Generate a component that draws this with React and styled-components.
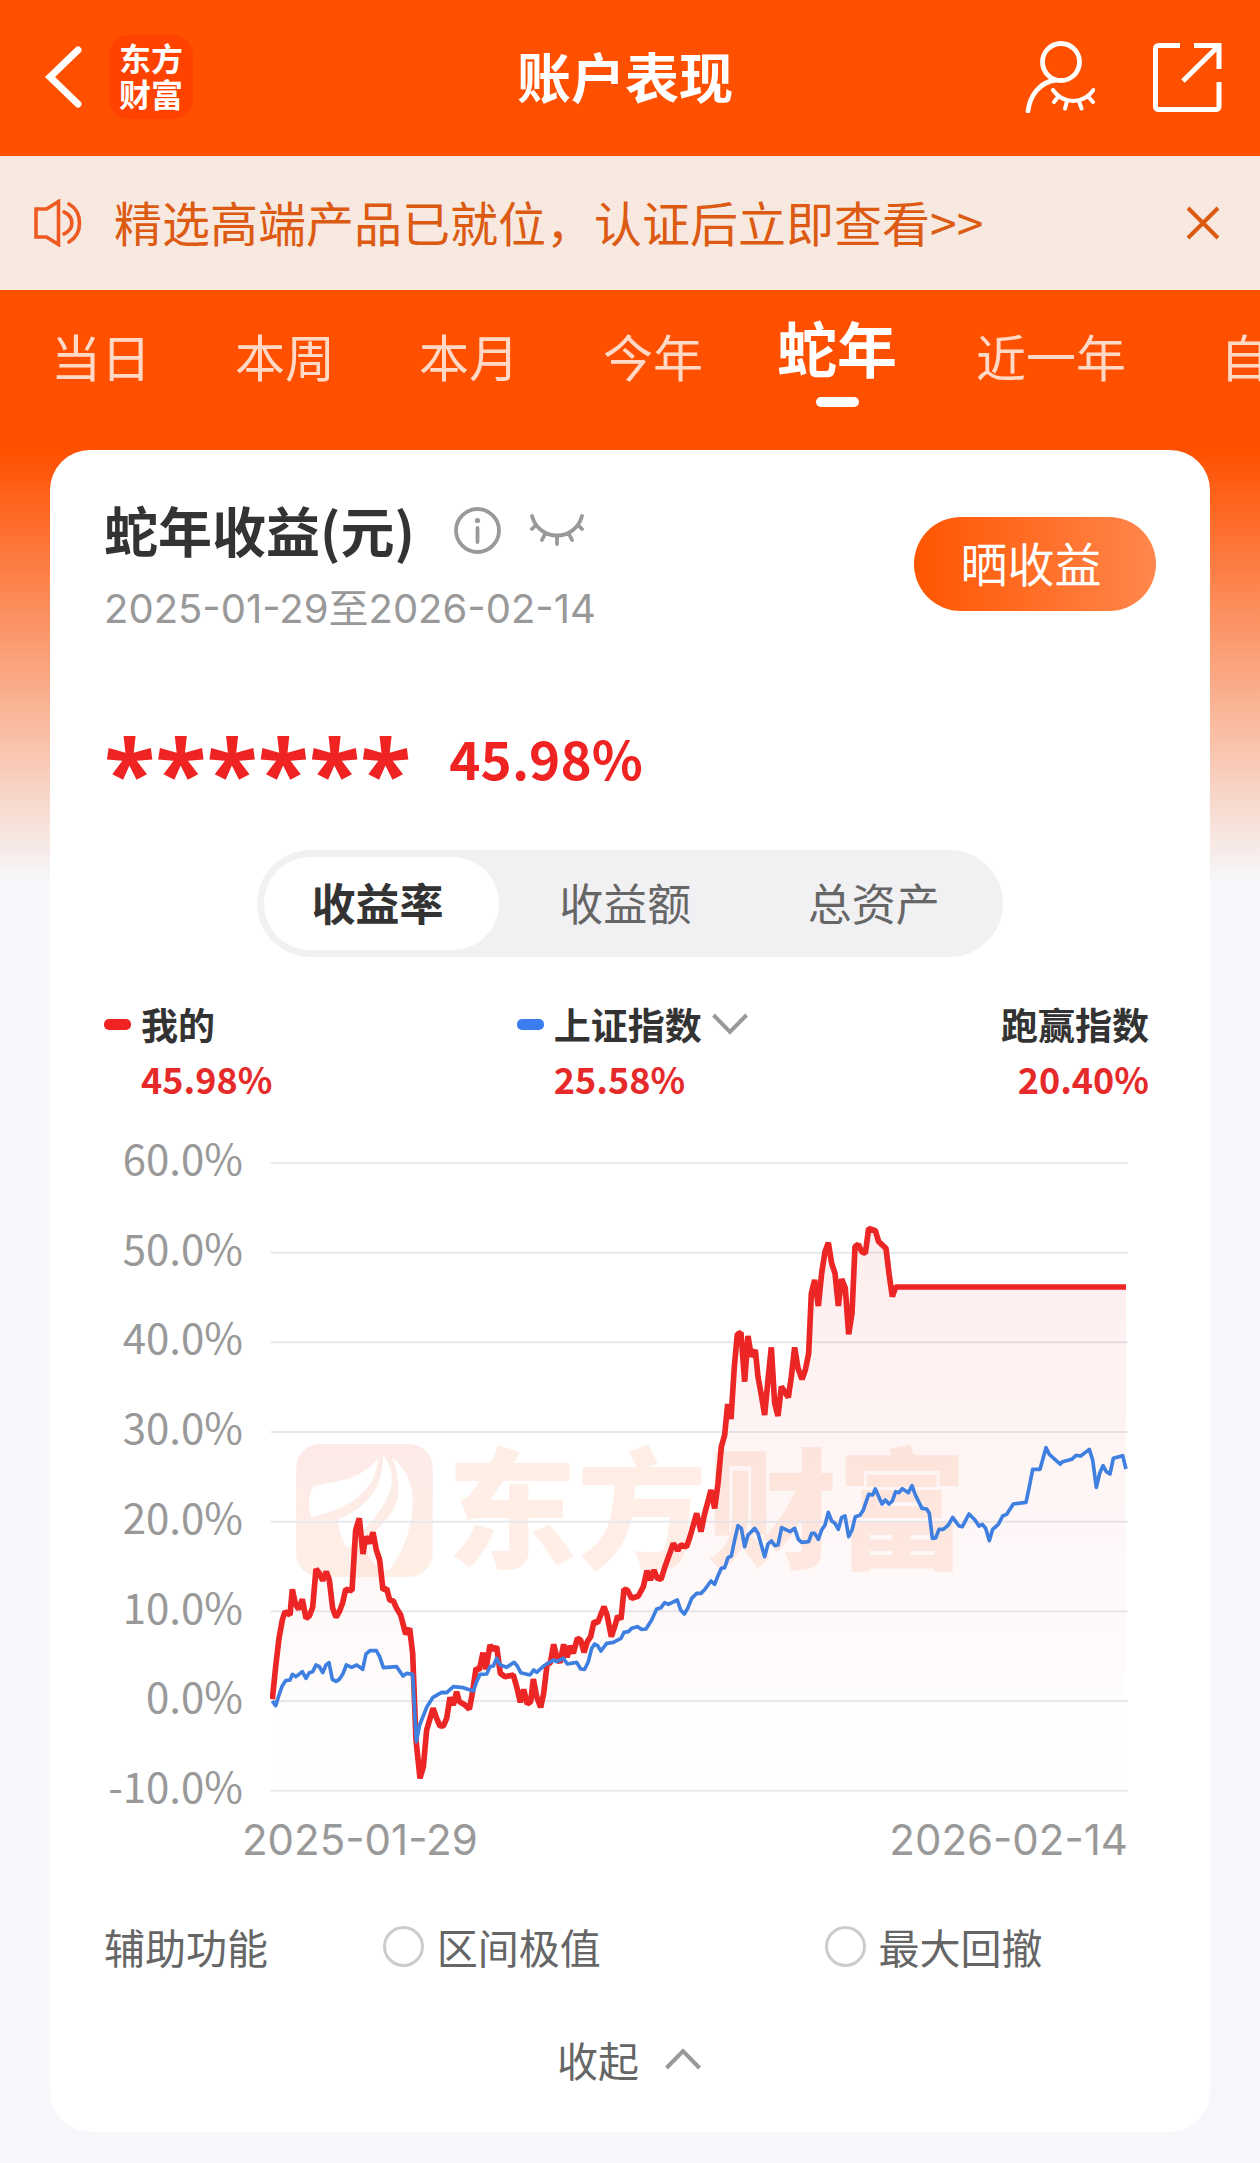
import React, { useState } from "react";
import styled, { createGlobalStyle, css } from "styled-components";

const GlobalStyle = createGlobalStyle`
  *, *::before, *::after { box-sizing: border-box; }
  body {
    margin: 0;
    background: #f6f7fa;
    font-family: "Noto Sans CJK SC", "Liberation Sans", sans-serif;
  }
  h1, h2, p { margin: 0; }
  button, select, input { font: inherit; color: inherit; }
`;

const colors = {
  brand: "#ff5000",
  notice: "#dc5a12",
  ink: "#333333",
  body: "#666666",
  muted: "#999999",
  rise: "#f02323",
  index: "#3f7fe0",
};

const plainButton = css`
  border: 0;
  padding: 0;
  background: none;
  cursor: pointer;
`;

const Page = styled.div`
  padding-bottom: 31px;
  background: linear-gradient(${colors.brand} 450px, #f6f7fa 880px);
  overflow: hidden;
`;

const Header = styled.header`
  display: grid;
  grid-template-columns: 1fr auto 1fr;
  align-items: center;
  height: 156px;
  padding: 0 38px 2px 44px;
  color: #fff;
`;

const HeaderSide = styled.div`
  display: flex;
  align-items: center;
  justify-content: ${(p) => (p.$end ? "flex-end" : "flex-start")};
  gap: ${(p) => (p.$end ? 58 : 26)}px;
`;

const IconButton = styled.button`
  ${plainButton}
  display: flex;
  flex: none;
`;

const Title = styled.h1`
  font-size: 54px;
  line-height: 72px;
  font-weight: 700;
  padding: 0 16px 2px 0;
`;

const LogoTile = styled.a`
  width: 84px;
  height: 84px;
  padding: 4px 10px;
  border-radius: 20px;
  background: #ff4200;
  color: #fff;
  text-align: center;
  text-decoration: none;
  font-size: 32px;
  line-height: 36px;
  font-weight: 700;
`;

const Notice = styled.div`
  display: flex;
  align-items: center;
  height: 134px;
  padding: 0 40px 0 34px;
  background: #f7e8e0;
  color: ${colors.notice};
`;

const NoticeLink = styled.a`
  flex: 1;
  margin-left: 32px;
  padding-bottom: 4px;
  color: inherit;
  text-decoration: none;
  font-size: 48px;
  line-height: 64px;
  white-space: nowrap;
`;

const Tabs = styled.nav`
  display: flex;
  height: 160px;
  padding-left: 9px;
`;

const Tab = styled.button`
  ${plainButton}
  flex: none;
  display: flex;
  flex-direction: column;
  align-items: center;
  width: ${(p) => (p.$wide ? 244 : 184)}px;
  padding-top: ${(p) => (p.$active ? 17 : 25)}px;
  color: ${(p) => (p.$active ? "#fff" : "#ffd9c6")};
  font-size: ${(p) => (p.$active ? 60 : 50)}px;
  font-weight: ${(p) => (p.$active ? 700 : 400)};
  line-height: 80px;

  &::after {
    content: "";
    width: 43px;
    height: 10px;
    margin-top: 10px;
    border-radius: 5px;
    background: ${(p) => (p.$active ? "#fff" : "transparent")};
  }
`;

const Card = styled.main`
  margin: 0 50px;
  padding: 50px 54px 43px;
  border-radius: 40px;
  background: #fff;
`;

const CardHead = styled.div`
  display: flex;
  justify-content: space-between;
  align-items: flex-start;
`;

const TitleRow = styled.div`
  display: flex;
  align-items: center;
`;

const CardTitle = styled.h2`
  margin-right: 39px;
  font-size: 54px;
  line-height: 60px;
  font-weight: 700;
  color: ${colors.ink};
`;

const EyeButton = styled(IconButton)`
  margin-left: 29px;
`;

const Period = styled.p`
  margin-top: 24px;
  font-family: Inter, "Noto Sans CJK SC", sans-serif;
  font-size: 40px;
  line-height: 50px;
  color: ${colors.muted};
`;

const ShareButton = styled.button`
  ${plainButton}
  width: 242px;
  height: 94px;
  margin-top: 17px;
  padding: 0 8px 4px 0;
  border-radius: 47px;
  background: linear-gradient(90deg, #ff5500, #ff874d);
  color: #fff;
  font-size: 47px;
  line-height: 64px;
`;

const Amount = styled.div`
  display: flex;
  align-items: center;
  height: 100px;
  margin-top: 73px;
  color: ${colors.rise};
  font-weight: 700;
`;

const Masked = styled.span`
  height: 72px;
  font-family: "Open Sans", sans-serif;
  font-size: 94px;
  line-height: 100px;
`;

const Rate = styled.span`
  margin-left: 38px;
  font-size: 53px;
  line-height: 72px;
`;

const Segments = styled.div`
  display: flex;
  width: 746px;
  max-width: 100%;
  height: 107px;
  margin: 43px auto 0;
  padding: 7px;
  border-radius: 54px;
  background: #f1f1f4;
`;

const Segment = styled.button`
  ${plainButton}
  flex: ${(p) => (p.$active ? "0 0 235px" : "1")};
  padding: ${(p) => (p.$active ? "0 8px 4px 0" : "0 0 4px 4px")};
  border-radius: 47px;
  background: ${(p) => (p.$active ? "#fff" : "transparent")};
  color: ${(p) => (p.$active ? colors.ink : colors.body)};
  font-size: 44px;
  font-weight: ${(p) => (p.$active ? 700 : 400)};
`;

const Legend = styled.div`
  display: grid;
  grid-template-columns: 39.5% 1fr auto;
  margin-top: 44px;
  padding-right: 7px;
`;

const LegendItem = styled.div`
  display: grid;
  grid-template-columns: ${(p) => (p.$marker ? "27px auto" : "auto")};
  column-gap: 10px;
  row-gap: 8px;
  align-items: center;
  justify-content: start;
  justify-items: ${(p) => (p.$marker ? "start" : "end")};
`;

const Marker = styled.span`
  width: 27px;
  height: 11px;
  border-radius: 5px;
  background: ${(p) => p.$color};
`;

const LegendName = styled.span`
  font-size: 37px;
  line-height: 46px;
  font-weight: 700;
  color: ${colors.ink};
`;

const LegendValue = styled.span`
  grid-column: ${(p) => (p.$indent ? 2 : 1)};
  font-size: 36px;
  line-height: 46px;
  font-weight: 700;
  color: #e62a2a;
`;

const SelectWrap = styled.div`
  display: flex;
  align-items: center;

  svg { margin-left: -36px; pointer-events: none; }
`;

const IndexSelect = styled.select`
  appearance: none;
  border: 0;
  margin: 0;
  padding: 0 46px 0 0;
  background: none;
  color: ${colors.ink};
  font-size: 37px;
  line-height: 46px;
  height: 46px;
  font-weight: 700;
`;

const Chart = styled.div`
  display: flex;
  margin-top: 36px;
  padding-right: 28px;
`;

const YAxis = styled.div`
  display: flex;
  flex-direction: column;
  justify-content: space-between;
  align-items: flex-end;
  flex: none;
  width: 139px;
  height: 668px;
  color: ${colors.muted};
  font-size: 42px;
  line-height: 40px;
`;

const Plot = styled.div`
  position: relative;
  flex: 1;
  margin: 23px 0 0 27px;
`;

const PlotSvg = styled.svg`
  position: relative;
  display: block;
  width: 100%;
  height: 640px;
`;

const Watermark = styled.div`
  position: absolute;
  top: 284px;
  left: 26px;
  display: flex;
  align-items: center;
  gap: 14px;
  height: 133px;
  color: #feeee5;
  font-size: 130px;
  line-height: 133px;
  font-weight: 900;
  white-space: nowrap;

  span { padding-bottom: 18px; }
`;

const XAxis = styled.div`
  display: flex;
  justify-content: space-between;
  margin: 10px 28px 0 138px;
  color: ${colors.muted};
  font-family: Inter, sans-serif;
  font-size: 42px;
  line-height: 50px;
`;

const Helpers = styled.fieldset`
  display: flex;
  align-items: center;
  margin: 56px 0 0;
  padding: 0;
  border: 0;
  min-width: 0;
  font-size: 41px;
  line-height: 50px;
  color: ${colors.body};
`;

const HelperTitle = styled.span`
  width: 26.5%;
`;

const Option = styled.label`
  display: flex;
  align-items: center;
  gap: 13px;
  width: ${(p) => p.$width};
`;

const Radio = styled.input`
  appearance: none;
  flex: none;
  width: 41px;
  height: 41px;
  margin: 0;
  border: 3px solid #cccccc;
  border-radius: 50%;
  background: #fff;

  &:checked { border: 12px solid ${colors.brand}; }
`;

const Collapse = styled.button`
  ${plainButton}
  display: flex;
  align-items: center;
  gap: 24px;
  margin: 58px auto 0;
  color: ${colors.body};
  font-size: 41px;
  line-height: 60px;
`;

const BackIcon = () => (
  <svg width="39" height="62" viewBox="0 0 39 62" fill="none" stroke="#fff" strokeWidth="7" strokeLinecap="round">
    <path d="M34 4 6 31l28 27" />
  </svg>
);

const HiddenUserIcon = () => (
  <svg width="70" height="72" viewBox="0 0 70 72" fill="none" stroke="#fff" strokeLinecap="round">
    <g strokeWidth="4.8">
      <circle cx="36" cy="21" r="18.5" />
      <path d="M3 70C5 54 15 41 31 39" />
    </g>
    <path strokeWidth="4" d="M28 49c10 14.500 30.500 14.500 40.500 0M33 56l-4 5M42 60l-2 7.500M54 60l2.500 7.500M63.500 56l4.500 5" />
  </svg>
);

const ShareIcon = () => (
  <svg width="69" height="69" viewBox="0 0 69 69" fill="none" stroke="#fff" strokeWidth="5">
    <path d="M27 2.500H5.500a3 3 0 0 0-3 3v58a3 3 0 0 0 3 3h57.500a3 3 0 0 0 3-3V39M41 2.500h25V26M66 2.500 30 38" />
  </svg>
);

const SpeakerIcon = () => (
  <svg width="48" height="48" viewBox="0 0 48 48" fill="none" stroke="#ee5a20" strokeWidth="3.600" strokeLinecap="round">
    <path d="M2 10h10.500L24.500 2.500v43L12.500 38H2zM30 13c10.500 5 10.500 17 0 22M35 5c14 8 14 30 0 38" />
  </svg>
);

const CloseIcon = () => (
  <svg width="34" height="34" viewBox="0 0 34 34" fill="none" stroke={colors.notice} strokeWidth="4">
    <path d="m2 2 30 30M32 2 2 32" />
  </svg>
);

const InfoIcon = () => (
  <svg width="47" height="47" viewBox="0 0 47 47" fill="none" stroke={colors.muted} strokeWidth="3.800" strokeLinecap="round">
    <circle cx="23.500" cy="23.500" r="21.500" />
    <path d="M23.500 21v14" />
    <circle cx="23.500" cy="13.500" r="2.600" fill={colors.muted} stroke="none" />
  </svg>
);

const ClosedEyeIcon = () => (
  <svg width="54" height="32" viewBox="0 0 54 32" fill="none" stroke={colors.muted} strokeWidth="3.800" strokeLinecap="round">
    <path d="M2 2c7 26 43 26 50 0M6 11l-4 4M48 11l4 4M15.500 19 12 26M38.500 19l3.500 7M27 22v8" />
  </svg>
);

const Chevron = ({ up, width }) => (
  <svg width={width} height="22" viewBox="0 0 36 22" fill="none" stroke={colors.muted} strokeWidth="4">
    <path d={up ? "M1.500 20 18 3l16.500 17" : "M1.500 2 18 19 34.500 2"} />
  </svg>
);

const WatermarkLogo = () => (
  <svg width="137" height="133" viewBox="0 0 411 400">
    <defs>
      <linearGradient id="leaf" x1="0" y1="0" x2="0" y2="1">
        <stop offset="0" stopColor="#fdeae8" />
        <stop offset="1" stopColor="#feefe5" />
      </linearGradient>
    </defs>
    <rect width="411" height="400" rx="72" fill="url(#leaf)" />
    <g fill="#fff">
      <path d="M246 42C190 115 110 112 55 126C35 145 35 190 45 220C150 195 240 150 246 42Z" />
      <path d="M262 32C295 80 295 120 270 170C240 230 185 270 155 314C140 290 125 260 125 228C205 190 258 150 262 32Z" />
      <path d="M288 40C340 80 355 140 350 190C345 270 310 340 282 378C250 385 215 350 212 310C225 260 300 220 307 150C309 110 300 70 288 40Z" />
    </g>
  </svg>
);

/* Plot units are a third of a pixel; the 20% line lies at 305 and each 10% takes 269. */
const GRID = [-771, -502, -233, 36, 305, 574, 843, 1112];

const MINE =
  "97,838 107,740 117,655 127,600 135,575 150,585 157,508 166,550 176,568 187,538 198,595 208,588 218,562 228,447 238,460 248,482 259,455 268,480 278,565 288,592 298,575 308,548 317,508 336,512 347,330 358,295 369,402 377,350 388,370 399,337 409,390 419,420 429,510 440,505 449,540 460,543 470,565 482,585 497,642 509,625 518,700 528,960 540,1075 550,1040 560,930 579,865 590,895 600,918 610,918 620,895 630,832 640,855 650,815 658,845 675,855 688,868 697,820 708,745 718,750 729,698 738,748 750,675 760,690 770,680 781,760 795,770 820,765 830,800 841,847 851,808 862,852 872,845 880,777 890,830 902,862 911,820 921,735 931,728 941,673 950,710 960,728 971,673 981,712 990,678 1000,700 1012,655 1022,660 1032,697 1042,665 1052,650 1062,605 1073,608 1092,560 1101,585 1114,650 1124,620 1133,588 1143,598 1152,508 1162,510 1175,535 1195,528 1210,500 1221,452 1231,480 1242,450 1252,475 1263,478 1275,440 1300,370 1313,392 1322,375 1340,380 1350,350 1370,280 1383,335 1393,285 1413,210 1424,265 1434,190 1444,80 1454,45 1463,-48 1473,-3 1483,-160 1492,-257 1503,-262 1514,-115 1524,-252 1534,-190 1546,-210 1554,-130 1564,-75 1574,-15 1584,-120 1594,-218 1604,-50 1614,-12 1624,-100 1645,-68 1654,-130 1664,-218 1674,-155 1686,-122 1696,-150 1706,-200 1714,-380 1724,-420 1735,-342 1745,-440 1755,-505 1765,-532 1775,-470 1785,-440 1795,-342 1805,-423 1816,-395 1826,-257 1836,-320 1845,-520 1855,-527 1865,-505 1876,-500 1886,-575 1906,-568 1916,-535 1938,-515 1947,-440 1957,-370 1967,-399 2658,-399";

const INDEX =
  "97,843 107,857 117,825 127,797 137,782 150,780 157,763 168,770 187,755 198,775 208,758 218,755 228,735 238,740 248,758 258,735 267,728 277,778 288,784 298,778 308,763 319,735 335,742 350,735 368,748 378,702 390,692 409,692 419,710 430,743 470,740 489,768 500,760 518,763 529,965 539,915 560,862 579,832 605,817 620,818 640,800 670,803 700,813 710,785 720,763 740,762 750,740 760,738 770,715 781,735 800,742 822,727 832,738 842,758 870,765 881,750 890,757 911,738 940,720 950,725 970,715 982,732 1010,727 1022,747 1034,748 1045,725 1055,685 1064,672 1073,677 1083,693 1100,670 1120,667 1143,655 1152,637 1165,635 1175,625 1192,620 1205,628 1218,627 1235,600 1250,567 1263,563 1274,548 1285,553 1312,540 1322,570 1333,582 1343,565 1355,535 1370,520 1383,520 1393,510 1413,483 1424,493 1434,467 1444,445 1454,443 1464,413 1474,408 1484,360 1494,317 1504,325 1514,380 1524,345 1544,325 1554,340 1564,375 1574,410 1584,372 1594,363 1605,377 1614,375 1625,323 1650,335 1664,325 1675,358 1685,367 1706,365 1715,340 1724,340 1735,358 1745,330 1755,315 1765,277 1775,303 1785,310 1795,328 1805,292 1815,288 1826,350 1836,330 1846,290 1860,286 1870,270 1886,223 1898,225 1906,207 1926,252 1936,240 1947,252 1957,243 1967,215 1977,218 1987,206 2005,218 2016,197 2026,225 2046,265 2060,267 2068,280 2077,355 2087,354 2097,328 2110,328 2125,315 2138,292 2157,318 2167,320 2187,282 2205,300 2217,318 2227,313 2237,325 2248,362 2258,328 2275,313 2288,288 2300,283 2320,252 2358,247 2368,200 2378,148 2400,148 2418,83 2428,103 2460,132 2468,125 2495,118 2508,106 2522,108 2548,88 2558,120 2569,202 2579,160 2589,137 2599,155 2610,162 2620,115 2648,107 2658,147";

const TrendPlot = () => (
  <PlotSvg viewBox="90 -780 2574 1920" preserveAspectRatio="none" role="img" aria-label="收益率">
    <defs>
      <linearGradient id="fade" gradientUnits="userSpaceOnUse" x1="0" y1="-580" x2="0" y2="1112">
        <stop offset="0" stopColor="#f02323" stopOpacity="0.08" />
        <stop offset="1" stopColor="#f02323" stopOpacity="0" />
      </linearGradient>
    </defs>
    {GRID.map((y) => (
      <path key={y} d={`M92 ${y}H2664`} stroke="#e8e9ee" strokeWidth="6" />
    ))}
    <polygon points={`97,1112 ${MINE} 2658,1112`} fill="url(#fade)" />
    <g fill="none">
      <polyline points={MINE} stroke="#ec2525" strokeWidth="17" strokeLinejoin="bevel" />
      <polyline points={INDEX} stroke={colors.index} strokeWidth="11" strokeLinejoin="round" />
    </g>
  </PlotSvg>
);

const TABS = ["当日", "本周", "本月", "今年", "蛇年", "近一年", "自定义"];
const SEGMENTS = ["收益率", "收益额", "总资产"];
const LEVELS = ["60.0%", "50.0%", "40.0%", "30.0%", "20.0%", "10.0%", "0.0%", "-10.0%"];

export default function App() {
  const [tab, setTab] = useState("蛇年");
  const [segment, setSegment] = useState("收益率");

  return (
    <>
      <GlobalStyle />
      <Page>
        <Header>
          <HeaderSide>
            <IconButton aria-label="返回"><BackIcon /></IconButton>
            <LogoTile href="#home">东方财富</LogoTile>
          </HeaderSide>
          <Title>账户表现</Title>
          <HeaderSide $end>
            <IconButton aria-label="隐藏账户"><HiddenUserIcon /></IconButton>
            <IconButton aria-label="分享"><ShareIcon /></IconButton>
          </HeaderSide>
        </Header>

        <Notice>
          <SpeakerIcon />
          <NoticeLink href="#verify">精选高端产品已就位，认证后立即查看&gt;&gt;</NoticeLink>
          <IconButton aria-label="关闭"><CloseIcon /></IconButton>
        </Notice>

        <Tabs>
          {TABS.map((name) => (
            <Tab key={name} $active={name === tab} $wide={name.length > 2} onClick={() => setTab(name)}>
              {name}
            </Tab>
          ))}
        </Tabs>

        <Card>
          <CardHead>
            <div>
              <TitleRow>
                <CardTitle>蛇年收益(元)</CardTitle>
                <IconButton aria-label="说明"><InfoIcon /></IconButton>
                <EyeButton aria-label="显示金额"><ClosedEyeIcon /></EyeButton>
              </TitleRow>
              <Period>2025-01-29至2026-02-14</Period>
            </div>
            <ShareButton>晒收益</ShareButton>
          </CardHead>

          <Amount>
            <Masked>******</Masked>
            <Rate>45.98%</Rate>
          </Amount>

          <Segments>
            {SEGMENTS.map((name) => (
              <Segment key={name} $active={name === segment} onClick={() => setSegment(name)}>
                {name}
              </Segment>
            ))}
          </Segments>

          <Legend>
            <LegendItem $marker>
              <Marker $color={colors.rise} />
              <LegendName>我的</LegendName>
              <LegendValue $indent>45.98%</LegendValue>
            </LegendItem>
            <LegendItem $marker>
              <Marker $color="#3b7df0" />
              <SelectWrap>
                <IndexSelect aria-label="对比指数">
                  <option>上证指数</option>
                </IndexSelect>
                <Chevron width={36} />
              </SelectWrap>
              <LegendValue $indent>25.58%</LegendValue>
            </LegendItem>
            <LegendItem>
              <LegendName>跑赢指数</LegendName>
              <LegendValue>20.40%</LegendValue>
            </LegendItem>
          </Legend>

          <Chart>
            <YAxis>
              {LEVELS.map((level) => (
                <span key={level}>{level}</span>
              ))}
            </YAxis>
            <Plot>
              <Watermark aria-hidden="true">
                <WatermarkLogo />
                <span>东方财富</span>
              </Watermark>
              <TrendPlot />
            </Plot>
          </Chart>
          <XAxis>
            <span>2025-01-29</span>
            <span>2026-02-14</span>
          </XAxis>

          <Helpers>
            <HelperTitle>辅助功能</HelperTitle>
            <Option $width="42%">
              <Radio type="radio" name="helper" />
              区间极值
            </Option>
            <Option $width="auto">
              <Radio type="radio" name="helper" />
              最大回撤
            </Option>
          </Helpers>

          <Collapse>
            收起
            <Chevron up width={40} />
          </Collapse>
        </Card>
      </Page>
    </>
  );
}
